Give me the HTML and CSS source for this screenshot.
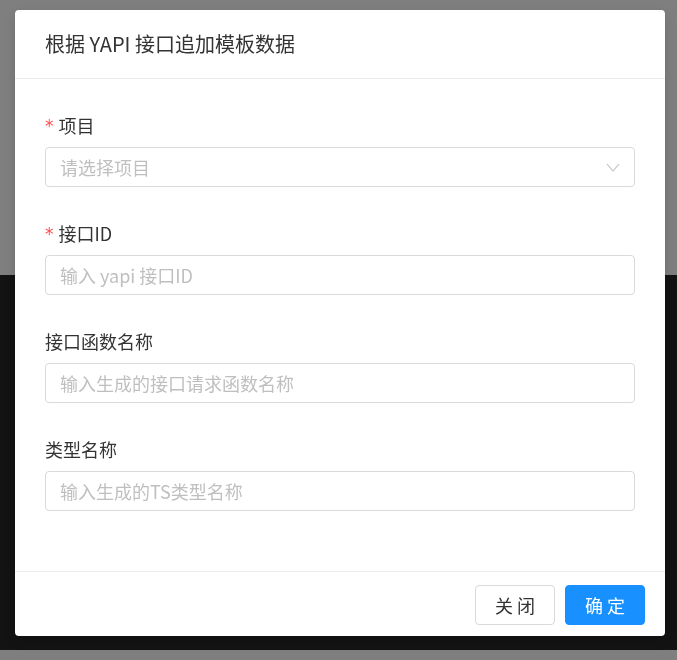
FILE: index.html
```html
<!DOCTYPE html>
<html lang="zh-CN">
<head>
    <meta charset="UTF-8">
    <meta name="viewport" content="width=device-width, initial-scale=1.0">
    <title>根据 YAPI 接口追加模板数据</title>
    <link rel="stylesheet" href="styles.css">
</head>
<body>
    <div class="page">
        <div class="page-top"></div>
        <div class="page-dark"></div>
    </div>
    <div class="mask"></div>

    <div class="modal">
        <div class="modal-header">根据 YAPI 接口追加模板数据</div>

        <form class="modal-body" id="yapiForm">
            <div class="form-item">
                <label class="required" for="project">项目</label>
                <div class="select" id="project">
                    <span class="placeholder">请选择项目</span>
                    <svg class="arrow" width="14" height="9" viewBox="0 0 14 9">
                        <path d="M1 1 L7 8 L13 1" fill="none" stroke="#bfbfbf" stroke-width="1.1"/>
                    </svg>
                </div>
            </div>

            <div class="form-item">
                <label class="required" for="apiId">接口ID</label>
                <input type="text" id="apiId" placeholder="输入 yapi 接口ID">
            </div>

            <div class="form-item">
                <label for="fnName">接口函数名称</label>
                <input type="text" id="fnName" placeholder="输入生成的接口请求函数名称">
            </div>

            <div class="form-item">
                <label for="typeName">类型名称</label>
                <input type="text" id="typeName" placeholder="输入生成的TS类型名称">
            </div>
        </form>

        <div class="modal-footer">
            <button type="button" class="btn">关 闭</button>
            <button type="button" class="btn btn-primary">确 定</button>
        </div>
    </div>
</body>
</html>
```

FILE: styles.css
```css
body {
    margin: 0;
    font-family: "Noto Sans CJK SC", "Noto Sans", sans-serif;
    color: #333;
    background-color: #fff;
}

.page-top {
    height: 275px;
    background-color: #fff;
}

.page-dark {
    height: 375px;
    background-color: #262626;
}

.mask {
    position: fixed;
    inset: 0;
    background-color: rgba(0, 0, 0, 0.5);
}

.modal {
    position: absolute;
    top: 10px;
    left: 15px;
    width: 650px;
    background: #fff;
    border-radius: 4px;
    box-shadow: 0 4px 12px rgba(0, 0, 0, 0.15);
}

.modal-header {
    height: 68px;
    line-height: 68px;
    padding: 0 30px;
    font-size: 20px;
    color: #333;
    border-bottom: 1px solid #ebebeb;
}

.modal-body {
    padding: 33px 30px 27px;
}

.form-item {
    margin-bottom: 33px;
}

.form-item label {
    display: flex;
    align-items: center;
    height: 26px;
    font-size: 18px;
    margin-bottom: 9px;
    color: #333;
}

.form-item label.required::before {
    content: "*";
    color: #ff4d4f;
    margin-right: 5px;
    font-family: "DejaVu Sans", sans-serif;
    font-size: 17px;
    line-height: 1;
    padding-top: 3px;
}

input, .select {
    display: block;
    box-sizing: border-box;
    width: 100%;
    height: 40px;
    padding: 0 14px;
    border: 1px solid #d9d9d9;
    border-radius: 4px;
    font-family: inherit;
    font-size: 18px;
    color: #333;
    background: #fff;
}

input::placeholder,
.placeholder {
    color: #bfbfbf;
}

.select {
    display: flex;
    align-items: center;
    justify-content: space-between;
}

.modal-footer {
    display: flex;
    justify-content: flex-end;
    gap: 10px;
    padding: 13px 20px 11px;
    border-top: 1px solid #ebebeb;
}

.btn {
    width: 80px;
    height: 40px;
    border: 1px solid #d9d9d9;
    border-radius: 4px;
    background: #fff;
    color: #333;
    font-family: inherit;
    font-size: 18px;
    cursor: pointer;
}

.btn-primary {
    background-color: #1890ff;
    border-color: #1890ff;
    color: #fff;
}
```
